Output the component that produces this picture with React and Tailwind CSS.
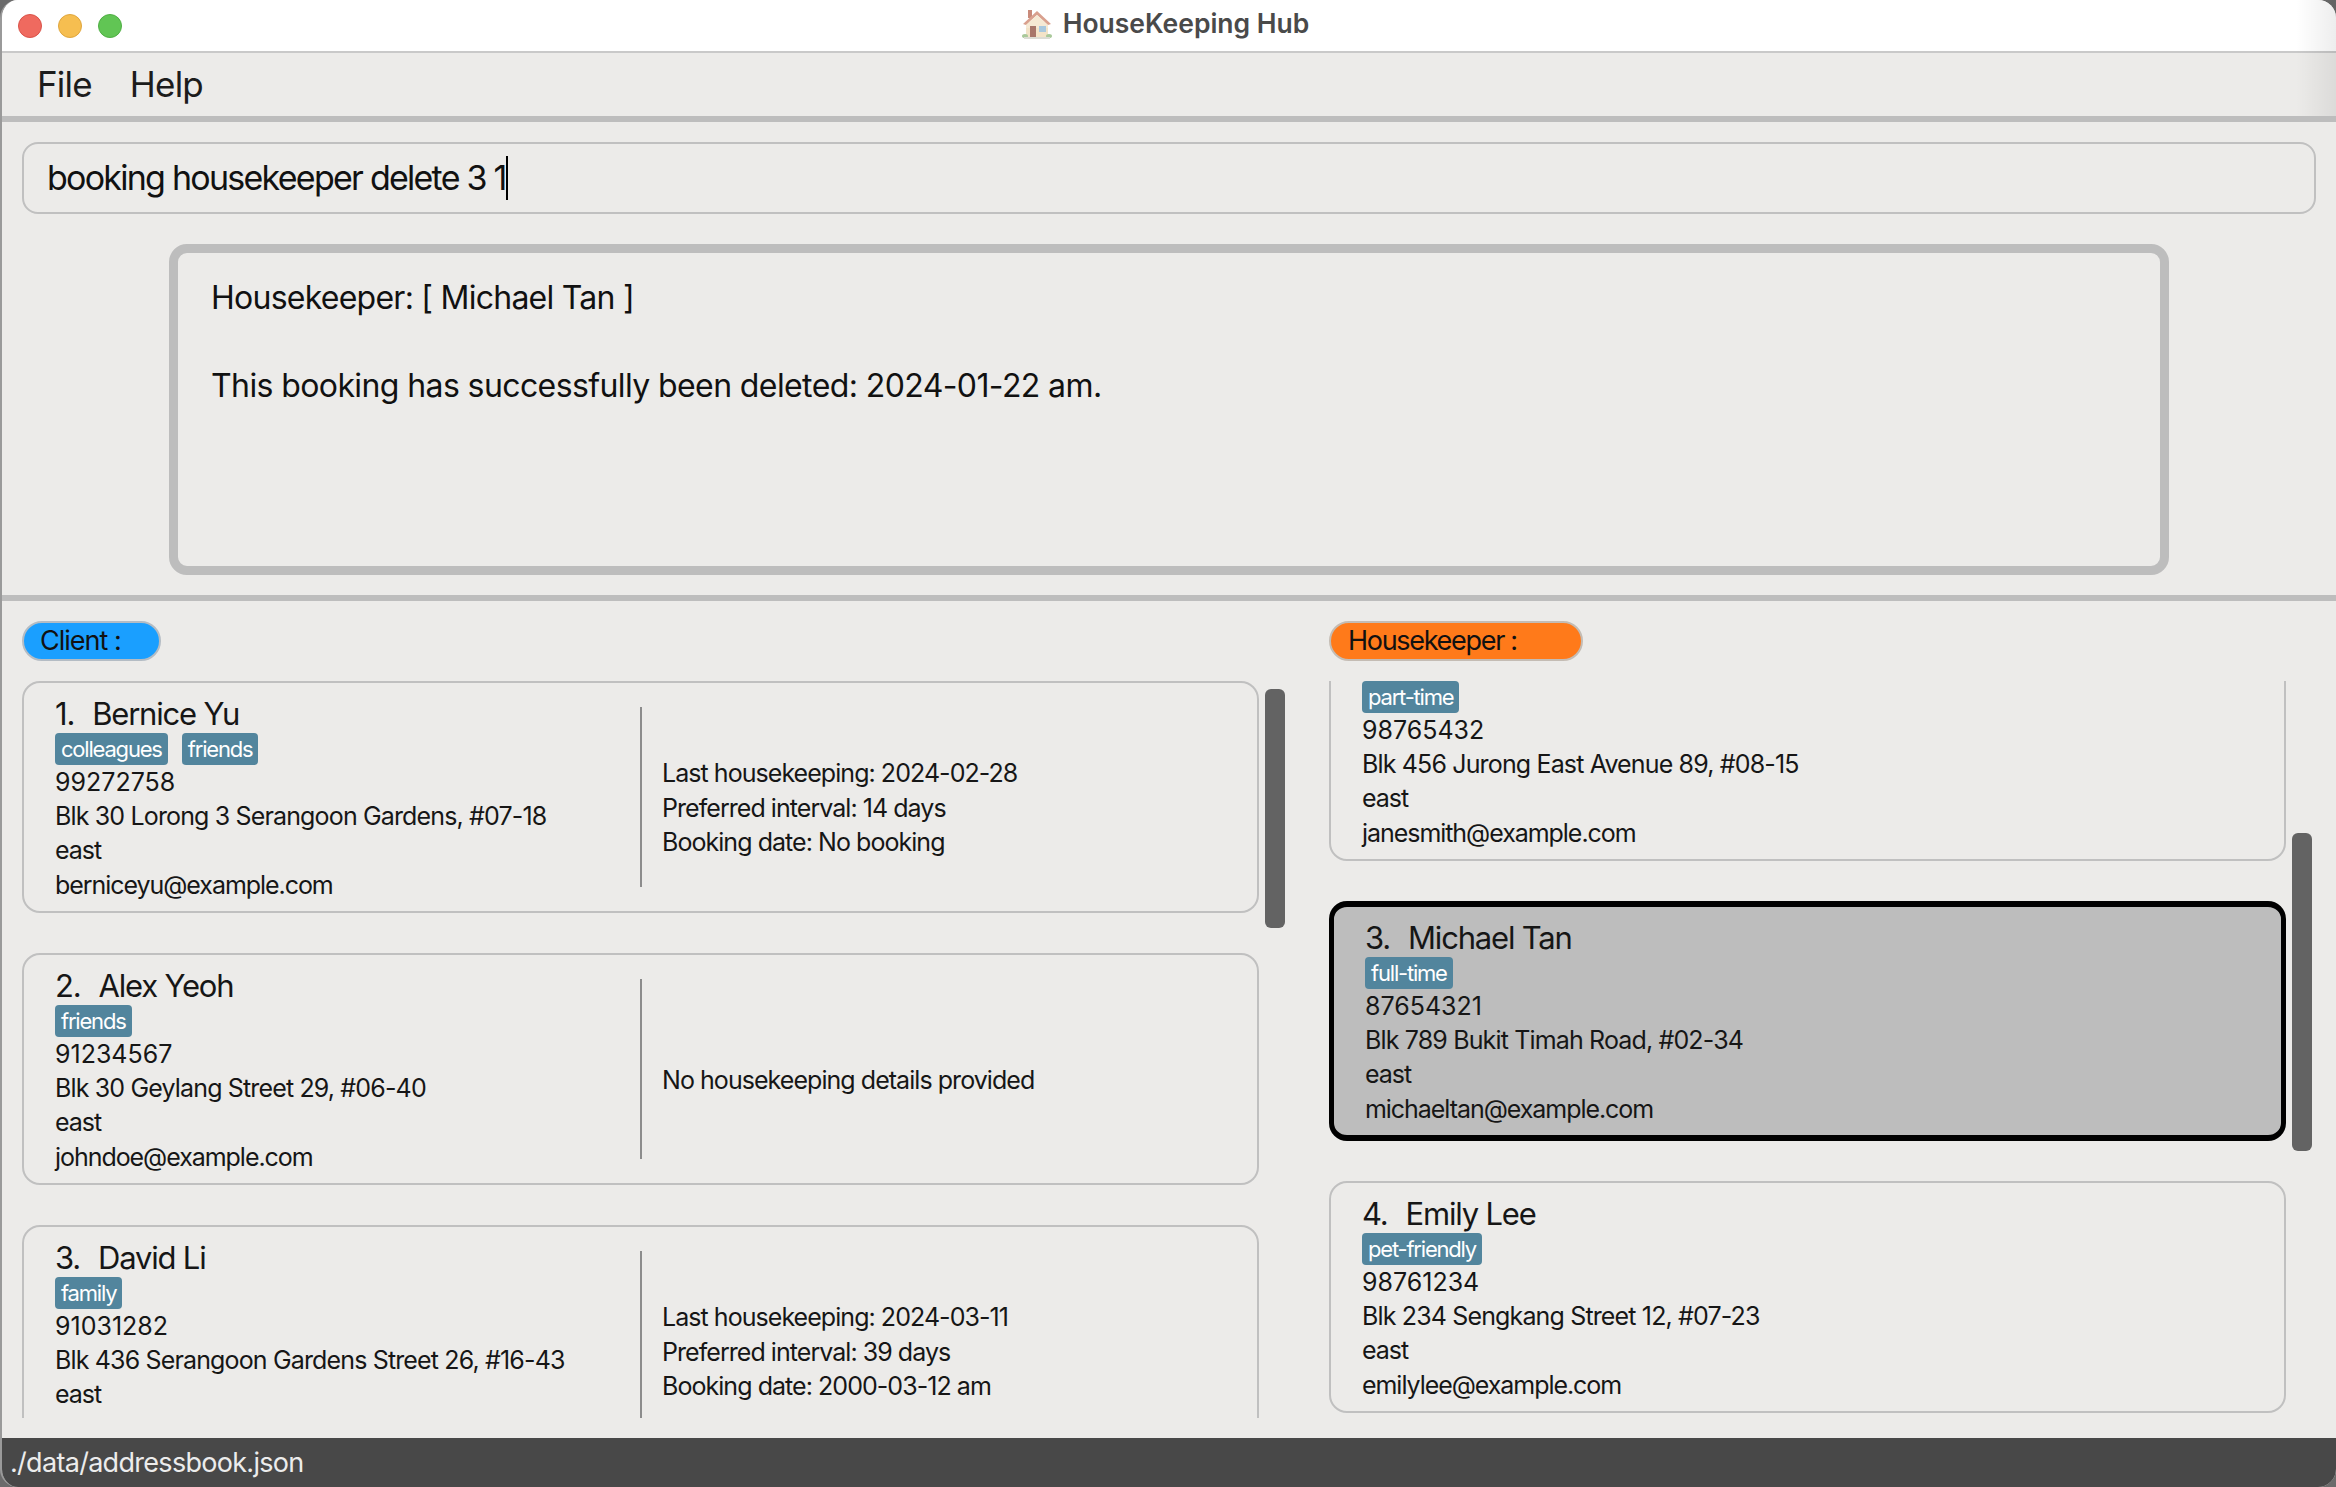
import React from 'react';

const clients = [
  {
    id: 1,
    name: 'Bernice Yu',
    tags: ['colleagues', 'friends'],
    phone: '99272758',
    address: 'Blk 30 Lorong 3 Serangoon Gardens, #07-18',
    area: 'east',
    email: 'berniceyu@example.com',
    details: ['Last housekeeping: 2024-02-28', 'Preferred interval: 14 days', 'Booking date: No booking'],
  },
  {
    id: 2,
    name: 'Alex Yeoh',
    tags: ['friends'],
    phone: '91234567',
    address: 'Blk 30 Geylang Street 29, #06-40',
    area: 'east',
    email: 'johndoe@example.com',
    details: ['No housekeeping details provided'],
  },
  {
    id: 3,
    name: 'David Li',
    tags: ['family'],
    phone: '91031282',
    address: 'Blk 436 Serangoon Gardens Street 26, #16-43',
    area: 'east',
    email: 'davidli@example.com',
    details: ['Last housekeeping: 2024-03-11', 'Preferred interval: 39 days', 'Booking date: 2000-03-12 am'],
  },
];

const housekeepers = [
  {
    id: 2,
    name: 'Jane Smith',
    tags: ['part-time'],
    phone: '98765432',
    address: 'Blk 456 Jurong East Avenue 89, #08-15',
    area: 'east',
    email: 'janesmith@example.com',
  },
  {
    id: 3,
    name: 'Michael Tan',
    tags: ['full-time'],
    phone: '87654321',
    address: 'Blk 789 Bukit Timah Road, #02-34',
    area: 'east',
    email: 'michaeltan@example.com',
    selected: true,
  },
  {
    id: 4,
    name: 'Emily Lee',
    tags: ['pet-friendly'],
    phone: '98761234',
    address: 'Blk 234 Sengkang Street 12, #07-23',
    area: 'east',
    email: 'emilylee@example.com',
  },
];

const HouseIcon = () => (
  <svg width="32" height="32" viewBox="0 0 32 32" className="shrink-0">
    <rect x="7" y="2" width="4" height="8" fill="#c98a7a" />
    <rect x="5" y="14" width="22" height="15" fill="#f3e3c8" />
    <path d="M2 16 L16 3 L30 16 L27 17 L16 7 L5 17 Z" fill="#d9a08e" />
    <path d="M16 7 L27 17 L27 20 L5 20 L5 17 Z" fill="#f6e9d4" />
    <rect x="9" y="18" width="6" height="11" fill="#a8766a" />
    <rect x="18" y="18" width="7" height="6" fill="#a9c8de" />
    <ellipse cx="4" cy="28" rx="3" ry="2" fill="#a9c99a" />
    <ellipse cx="28" cy="28" rx="3" ry="2" fill="#a9c99a" />
    <rect x="3" y="29" width="26" height="2" fill="#dcdcd4" />
  </svg>
);

const PersonCard = ({ person, twoColumn }) => (
  <div
    className={`flex shrink-0 rounded-[18px] ${
      person.selected
        ? 'border-x-[5px] border-y-[6px] border-black bg-[#bdbdbd]'
        : 'border-2 border-[#c0c0c0]'
    }`}
  >
    <div className="w-[616px] shrink-0 pl-[31px] pt-[13px] pb-2 text-[25px] text-[#161616]">
      <div className="h-[37px] whitespace-pre text-[31px] leading-[36px] tracking-[-1.2px]">
        <span className="mr-[3px]">{person.id}.  </span>
        {person.name}
      </div>
      <div className="flex h-8 gap-[14px]">
        {person.tags.map((tag) => (
          <span
            key={tag}
            className="h-8 rounded-[4px] bg-[#52859d] px-[6px] text-[22px] leading-8 tracking-[-1.2px] text-white"
          >
            {tag}
          </span>
        ))}
      </div>
      <div className="h-[34.5px] leading-[34px]">{person.phone}</div>
      <div className="h-[34.5px] whitespace-nowrap leading-[33px] tracking-[-0.85px]">{person.address}</div>
      <div className="h-[34.5px] leading-[33px] tracking-[-1px]">{person.area}</div>
      <div className="h-[34.5px] leading-[33px] tracking-[-1.05px]">{person.email}</div>
    </div>
    {twoColumn && (
      <>
        <div className="h-[180px] w-[2px] shrink-0 self-center bg-[#8c8c8c]" />
        <div className="flex flex-col justify-center pl-5 pt-[22px] text-[25px] tracking-[-0.95px] text-[#161616]">
          {person.details.map((line) => (
            <div key={line} className="h-[34.5px] whitespace-nowrap leading-[34.5px]">
              {line}
            </div>
          ))}
        </div>
      </>
    )}
  </div>
);

export default function App() {
  return (
    <div className="relative h-[1487px] w-[2336px] overflow-hidden bg-[#6b6b6b] font-['Inter',sans-serif]">
      <div className="flex h-full flex-col overflow-hidden rounded-[18px] border-l-2 border-[#9a9a9a] bg-[#ecebe9]">
        {/* Title bar */}
        <div className="grid h-[53px] shrink-0 grid-cols-3 items-center border-b-2 border-[#c9c9c9] bg-white">
          <div className="flex gap-[16px] pl-4">
            <span className="h-6 w-6 rounded-full border border-[#d9534a] bg-[#ef6a5f]" />
            <span className="h-6 w-6 rounded-full border border-[#dfa63e] bg-[#f6be50]" />
            <span className="h-6 w-6 rounded-full border border-[#4fae44] bg-[#61c554]" />
          </div>
          <div className="flex items-center justify-center gap-[10px] pb-[3px] pr-2 text-[26.5px] font-semibold text-[#4a4a4a]">
            <HouseIcon />
            <span className="whitespace-nowrap">HouseKeeping Hub</span>
          </div>
          <div />
        </div>

        {/* Menu */}
        <div className="flex h-[63px] shrink-0 items-center gap-[38px] pl-[35px] text-[35px] tracking-[-0.8px] text-[#1c1c1c]">
          <span>File</span>
          <span>Help</span>
        </div>
        <div className="h-[6px] shrink-0 bg-[#bdbdbd]" />

        {/* Command + result */}
        <div className="flex h-[473px] shrink-0 flex-col pt-5">
          <div className="mx-5 flex h-[72px] shrink-0 items-center rounded-[16px] border-2 border-[#c0c0c0] pb-[1px] pl-[23px] text-[34px] tracking-[-1.75px] text-[#111]">
            <span className="whitespace-pre">booking housekeeper delete 3 1</span>
            <span className="h-[44px] w-[2px] bg-black" />
          </div>
          <div className="ml-[167px] mt-[30px] h-[331px] w-[2000px] rounded-[18px] border-[9px] border-[#bdbdbd] px-[33px] pt-[23px] text-[32px] leading-[44px] tracking-[-0.6px] text-[#111]">
            <div className="tracking-[-0.75px]">Housekeeper: [ Michael Tan ]</div>
            <div className="h-[44px]" />
            <div>This booking has successfully been deleted: 2024-01-22 am.</div>
          </div>
        </div>
        <div className="h-[6px] shrink-0 bg-[#bdbdbd]" />

        {/* Lists */}
        <div className="flex min-h-0 flex-1">
          <div className="w-[1327px] shrink-0 pl-5 pt-5">
            <div className="flex h-10 w-[139px] items-center rounded-full border-2 border-[#b4bcc4] bg-[#1a9fff] pl-4 text-[27px] tracking-[-1px] text-[#111]">
              Client :
            </div>
            <div className="mt-5 flex h-[737px] overflow-hidden">
              <div className="flex w-[1237px] shrink-0 flex-col gap-10">
                {clients.map((c) => (
                  <PersonCard key={c.id} person={c} twoColumn />
                ))}
              </div>
              <div className="ml-[6px] mt-2 h-[239px] w-5 rounded-[6px] bg-[#636363]" />
            </div>
          </div>
          <div className="flex-1 pt-5">
            <div className="flex h-10 w-[254px] items-center rounded-full border-2 border-[#c4bcb4] bg-[#ff7a1a] pl-[17px] text-[27px] tracking-[-1.3px] text-[#111]">
              Housekeeper :
            </div>
            <div className="mt-5 flex h-[737px] overflow-hidden">
              <div className="w-[957px] shrink-0 overflow-hidden">
                <div className="-mt-[52px] flex flex-col gap-10">
                  {housekeepers.map((h) => (
                    <PersonCard key={h.id} person={h} />
                  ))}
                </div>
              </div>
              <div className="ml-[6px] mt-[152px] h-[318px] w-5 rounded-[6px] bg-[#636363]" />
            </div>
          </div>
        </div>

        {/* Status bar */}
        <div className="flex h-[49px] shrink-0 items-center bg-[#484848] pl-2 pt-[2px] text-[27px] tracking-[-0.7px] text-[#ececec]">
          ./data/addressbook.json
        </div>
      </div>
      {/* shadow falling over the window's top right edge */}
      <div className="pointer-events-none absolute right-0 top-0 h-[116px] w-10 bg-gradient-to-r from-transparent to-black/[0.07]" />
    </div>
  );
}
